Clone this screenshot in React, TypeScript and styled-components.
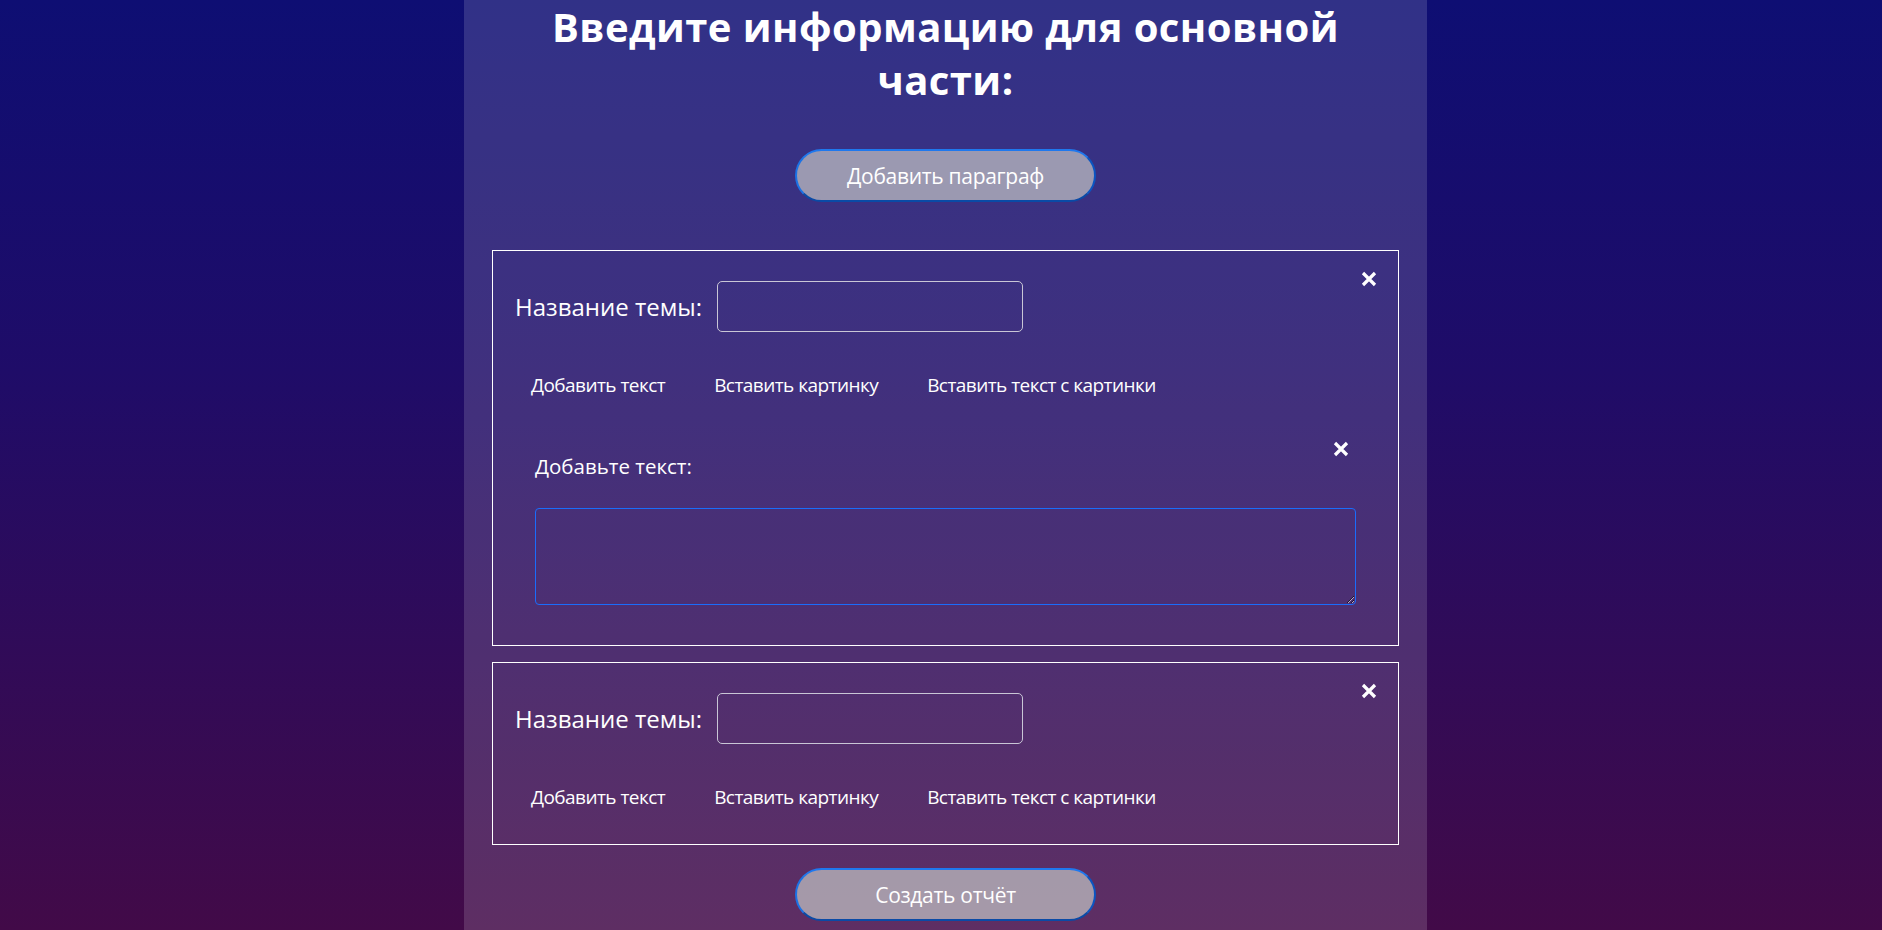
import React from "react";
import styled, { createGlobalStyle } from "styled-components";

const GlobalStyle = createGlobalStyle`
  * { box-sizing: border-box; }
  html, body {
    margin: 0;
    padding: 0;
  }
  body {
    min-height: 100vh;
    background: linear-gradient(180deg, #0e0e73 0%, #1f0c68 40%, #420a48 100%);
    background-attachment: fixed;
    font-family: "Open Sans", "Noto Sans", Arial, sans-serif;
    color: #ffffff;
  }
`;

const Page = styled.div`
  display: flex;
  justify-content: center;
  padding-left: 9px;
  min-height: 100vh;
`;

const Panel = styled.main`
  width: 963px;
  min-height: 100vh;
  padding: 0 28px 8px;
  background: rgba(255, 255, 255, 0.15);
  display: flex;
  flex-direction: column;
  align-items: center;
`;

const Title = styled.h1`
  margin: 0;
  width: 100%;
  text-align: center;
  font-size: 40px;
  line-height: 53px;
  font-weight: 700;
  letter-spacing: 0.45px;
`;

const PillButton = styled.button<{ $top: number }>`
  margin-top: ${(p) => p.$top}px;
  width: 301px;
  height: 53px;
  border-radius: 27px;
  border: 2px solid;
  border-color: #1f78ee #0b55c2 #0a4aa6 #1a72e6;
  background: rgba(190, 190, 193, 0.74);
  color: #ffffff;
  font-family: "Open Sans", "Noto Sans", Arial, sans-serif;
  font-size: 21px;
  letter-spacing: -0.3px;
  cursor: pointer;
`;

const Paragraphs = styled.div`
  margin-top: 48px;
  width: 100%;
  display: flex;
  flex-direction: column;
  gap: 16px;
`;

const Card = styled.section`
  position: relative;
  width: 100%;
  border: 1px solid #ffffff;
  padding: 30px 22px 25px;
`;

const CloseButton = styled.button<{ $top: number; $right: number }>`
  position: absolute;
  top: ${(p) => p.$top}px;
  right: ${(p) => p.$right}px;
  width: 16px;
  height: 16px;
  padding: 0;
  border: none;
  background: transparent;
  cursor: pointer;
  display: flex;
  svg { display: block; }
`;

const TopicRow = styled.div`
  display: flex;
  align-items: center;
  gap: 15px;
`;

const TopicLabel = styled.label`
  font-size: 24px;
  letter-spacing: 0;
  line-height: 1.3;
`;

const TopicInput = styled.input`
  width: 306px;
  height: 51px;
  border: 1px solid #c9c6d6;
  border-radius: 5px;
  background: transparent;
  color: #ffffff;
  font-size: 18px;
  padding: 0 10px;
  outline: none;
`;

const Actions = styled.div`
  margin-top: 31px;
  display: flex;
  gap: 17px;
`;

const ActionButton = styled.button`
  height: 44px;
  padding: 0 16px;
  border: none;
  background: transparent;
  color: #ffffff;
  font-family: "Open Sans", "Noto Sans", Arial, sans-serif;
  font-size: 19px;
  letter-spacing: -0.55px;
  line-height: 44px;
  cursor: pointer;
  white-space: nowrap;
`;

const TextBlock = styled.div`
  position: relative;
  margin: 24px 20px 15px;
  padding-top: 22px;
`;

const BlockLabel = styled.label`
  display: block;
  font-size: 20.5px;
  letter-spacing: 0;
  line-height: 27px;
  margin-bottom: 28px;
`;

const TextArea = styled.textarea`
  display: block;
  width: 100%;
  height: 97px;
  border: 1px solid #1a6dfb;
  border-radius: 4px;
  background: transparent;
  color: #ffffff;
  font-size: 16px;
  padding: 6px 8px;
  outline: none;
  resize: both;
`;

const CrossIcon = () => (
  <svg width="16" height="16" viewBox="0 0 16 16" aria-hidden="true">
    <path
      d="M2 2 L14 14 M14 2 L2 14"
      stroke="#ffffff"
      strokeWidth="3.2"
      strokeLinecap="butt"
      fill="none"
    />
  </svg>
);

const actions = ["Добавить текст", "Вставить картинку", "Вставить текст с картинки"];

const ParagraphCard: React.FC<{ withText?: boolean }> = ({ withText }) => (
  <Card>
    <CloseButton $top={20} $right={21} aria-label="Удалить параграф">
      <CrossIcon />
    </CloseButton>
    <TopicRow>
      <TopicLabel>Название темы:</TopicLabel>
      <TopicInput type="text" />
    </TopicRow>
    <Actions>
      {actions.map((a) => (
        <ActionButton key={a}>{a}</ActionButton>
      ))}
    </Actions>
    {withText && (
      <TextBlock>
        <CloseButton $top={10} $right={7} aria-label="Удалить текст">
          <CrossIcon />
        </CloseButton>
        <BlockLabel>Добавьте текст:</BlockLabel>
        <TextArea />
      </TextBlock>
    )}
  </Card>
);

export default function App() {
  return (
    <>
      <GlobalStyle />
      <Page>
        <Panel>
          <Title>Введите информацию для основной части:</Title>
          <PillButton $top={43}>Добавить параграф</PillButton>
          <Paragraphs>
            <ParagraphCard withText />
            <ParagraphCard />
          </Paragraphs>
          <PillButton $top={23}>Создать отчёт</PillButton>
        </Panel>
      </Page>
    </>
  );
}
